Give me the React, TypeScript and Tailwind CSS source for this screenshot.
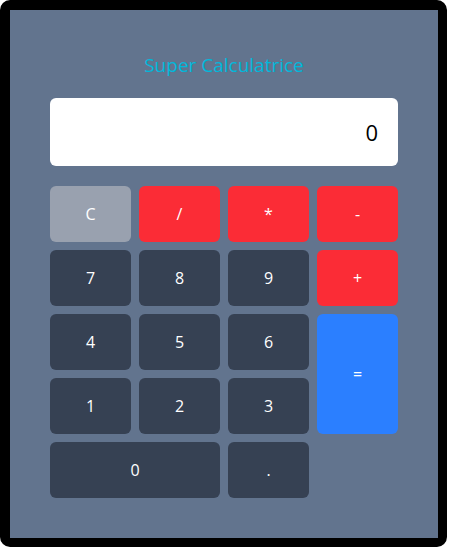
export default function App() {
  const dark = "bg-gray-700";
  return (
    <div className="w-[447px] h-[547px] bg-black rounded-[10px] border-l-[10px] border-t-[10px] border-r-[9px] border-b-[9px] border-black font-['Open_Sans',sans-serif]">
      <div className="w-full h-full bg-slate-500 px-10 pt-[40px]">
        <h1 className="text-center text-cyan-500 text-[19px] leading-[28px] h-[48px] pt-[1px]">Super Calculatrice</h1>
        <div className="h-[68px] bg-white rounded-md flex items-center justify-end pr-5 text-[22px] text-black">0</div>
        <div className="grid grid-cols-4 auto-rows-[56px] gap-2 mt-5 text-white text-[16px]">
          <button className="bg-gray-400 rounded-md">C</button>
          <button className="bg-red-500 rounded-md">/</button>
          <button className="bg-red-500 rounded-md">*</button>
          <button className="bg-red-500 rounded-md">-</button>
          <button className={`${dark} rounded-md`}>7</button>
          <button className={`${dark} rounded-md`}>8</button>
          <button className={`${dark} rounded-md`}>9</button>
          <button className="bg-red-500 rounded-md">+</button>
          <button className={`${dark} rounded-md`}>4</button>
          <button className={`${dark} rounded-md`}>5</button>
          <button className={`${dark} rounded-md`}>6</button>
          <button className="bg-blue-500 rounded-md row-span-2">=</button>
          <button className={`${dark} rounded-md`}>1</button>
          <button className={`${dark} rounded-md`}>2</button>
          <button className={`${dark} rounded-md`}>3</button>
          <button className={`${dark} rounded-md col-span-2`}>0</button>
          <button className={`${dark} rounded-md`}>.</button>
        </div>
      </div>
    </div>
  );
}
